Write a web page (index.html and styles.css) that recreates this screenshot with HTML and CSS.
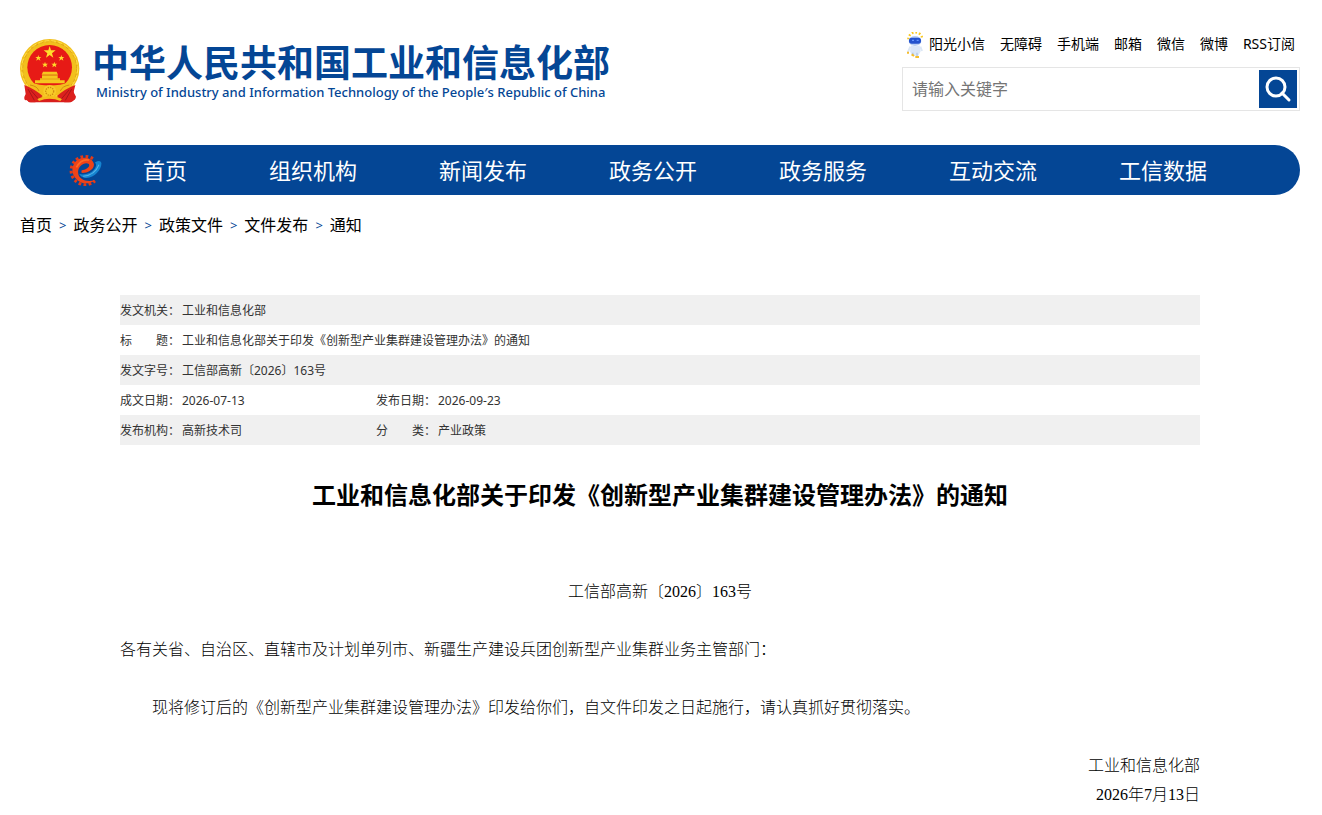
FILE: index.html
```html
<!DOCTYPE html>
<html lang="zh-CN">
  <head>
    <meta charset="utf-8">
    <meta name="viewport" content="width=device-width, initial-scale=1">
    <title>工业和信息化部关于印发《创新型产业集群建设管理办法》的通知</title>
    <link rel="stylesheet" href="styles.css">
  </head>
  <body>
    <div class="page">
      <header class="header">
        <a class="brand" href="/">
          <svg class="emblem" viewBox="30 27 180 192" aria-hidden="true">
            <path d="M60 160L48 202Q50 216 62 217H176Q194 216 197 200L180 160Z" fill="#d81e1c"/>
            <circle cx="119" cy="116" r="89" fill="#f2c01d"/>
            <circle cx="119" cy="116" r="81" fill="none" stroke="#e2a618" stroke-width="3" stroke-dasharray="9 7"/>
            <circle cx="119" cy="116" r="84" fill="none" stroke="#ffe04a" stroke-width="3" stroke-dasharray="14 6"/>
            <circle cx="119" cy="112" r="67" fill="#e71a16"/>
            <path d="M119 48L123 61H137L126 70L130 83L119 75L108 83L112 70L101 61H115Z" fill="#ffdf2b"/>
            <path id="star" d="M85 75L87 81H94L89 85L91 92L85 88L79 92L81 85L76 81H83Z" fill="#ffd92a"/>
            <use href="#star" x="69"/>
            <use href="#star" x="20" y="20"/>
            <use href="#star" x="48" y="20"/>
            <path d="M99 125H140L144 134H95ZM96 136H143V145H150V151H164V160H75V151H90V145H96Z" fill="#f6c71f"/>
            <path d="M90 147H150M96 136H143" stroke="#d9920f" stroke-width="2"/>
            <path d="M58 155Q119 178 181 155L184 170Q160 180 151 196H87Q77 178 54 170Z" fill="#f4bd1c"/>
            <path d="M60 165Q82 168 87 183M178 165Q157 168 151 183" fill="none" stroke="#d18b10" stroke-width="3"/>
            <circle cx="119" cy="184" r="19" fill="#f8cb28"/>
            <circle cx="119" cy="184" r="12" fill="none" stroke="#d18b10" stroke-width="4" stroke-dasharray="4 3"/>
            <path d="M43 165Q72 176 98 198L76 217H57L51 210Q42 214 43 201L47 192ZM196 165Q166 176 141 198L163 217H182L188 210Q198 212 197 198L190 190Z" fill="#dc201d"/>
            <path d="M54 177L73 211M62 180L86 208M185 177L166 211M177 180L153 208" stroke="#a81618" stroke-width="3"/>
            <path d="M82 207Q119 187 156 207L151 213Q119 199 87 213Z" fill="#f4bd1c"/>
          </svg>
          <span class="brand-text">
            <strong>中华人民共和国工业和信息化部</strong>
            <span class="brand-en">Ministry of Industry and Information Technology of the People′s Republic of China</span>
          </span>
        </a>
        <div class="tools">
          <div class="top-links">
            <a class="assistant" href="#">
              <svg class="robot" viewBox="50 32 48 78" aria-hidden="true">
                <path d="M54 54A21 21 0 0 1 96 54" fill="none" stroke="#f9c81e" stroke-width="7" stroke-dasharray="5 6"/>
                <ellipse cx="74" cy="59" rx="19" ry="15" fill="#b9cff3"/>
                <rect x="56" y="49" width="36" height="18" rx="8" fill="#2452cd"/>
                <path d="M65 57h6m8 0h6" stroke="#6596ff" stroke-width="4"/>
                <path d="M62 72Q75 78 88 72L91 90L84 103H65L59 90Z" fill="#dbe7f8"/>
                <path d="M60 76L52 94M90 76L95 89" stroke="#dce7f5" stroke-width="6"/>
                <path d="M67 94L69 103M80 94V106" stroke="#b8cdea" stroke-width="5"/>
                <path d="M64 99l7 5M75 107h11M50 94h6" stroke="#f5bd2c" stroke-width="6"/>
              </svg>阳光小信</a>
            <a href="#">无障碍</a>
            <a href="#">手机端</a>
            <a href="#">邮箱</a>
            <a href="#">微信</a>
            <a href="#">微博</a>
            <a href="#">RSS订阅</a>
          </div>
          <form class="search">
            <input type="text" name="q" placeholder="请输入关键字" aria-label="请输入关键字">
            <button type="submit" aria-label="搜索">
              <svg viewBox="0 0 38 38" aria-hidden="true">
                <circle cx="17" cy="17" r="9" fill="none" stroke="#fff" stroke-width="3"/>
                <path d="M23 23L30 30" stroke="#fff" stroke-width="3" stroke-linecap="round"/>
              </svg>
            </button>
          </form>
        </div>
      </header>

      <nav class="nav">
        <svg class="nav-logo" viewBox="180 44 98 95" aria-hidden="true">
          <path d="M251 58A42 42 0 1 0 257 124" fill="none" stroke="#e53a16" stroke-width="9" stroke-dasharray="8 7"/>
          <path d="M210 103C224 108 248 102 257 87Q264 76 257 69Q273 60 276 70C279 89 254 119 227 115Q215 113 210 103Z" fill="#1684d0"/>
          <path d="M222 110Q256 108 269 76" fill="none" stroke="#54b5e9" stroke-width="3"/>
          <path d="M217 100C230 102 256 92 254 74C250 48 200 46 191 83C183 119 229 147 258 121C235 129 208 121 207 99C206 79 228 66 239 74C244 83 230 91 217 93Z" fill="#ef4318"/>
          <path d="M202 84Q216 57 239 62" fill="none" stroke="#ff6a25" stroke-width="5"/>
        </svg>
        <a href="#">首页</a>
        <a href="#">组织机构</a>
        <a href="#">新闻发布</a>
        <a href="#">政务公开</a>
        <a href="#">政务服务</a>
        <a href="#">互动交流</a>
        <a href="#">工信数据</a>
      </nav>

      <div class="crumbs">
        <a href="#">首页</a>
        <span>&gt;</span>
        <a href="#">政务公开</a>
        <span>&gt;</span>
        <a href="#">政策文件</a>
        <span>&gt;</span>
        <a href="#">文件发布</a>
        <span>&gt;</span>
        <a href="#">通知</a>
      </div>

      <main class="article">
        <table class="info">
          <colgroup>
            <col class="label">
            <col class="value">
            <col class="label">
            <col>
          </colgroup>
          <tr>
            <th scope="row">发文机关：</th>
            <td colspan="3">工业和信息化部</td>
          </tr>
          <tr>
            <th scope="row">标　　题：</th>
            <td colspan="3">工业和信息化部关于印发《创新型产业集群建设管理办法》的通知</td>
          </tr>
          <tr>
            <th scope="row">发文字号：</th>
            <td colspan="3">工信部高新〔2026〕163号</td>
          </tr>
          <tr>
            <th scope="row">成文日期：</th>
            <td>2026-07-13</td>
            <th scope="row">发布日期：</th>
            <td>2026-09-23</td>
          </tr>
          <tr>
            <th scope="row">发布机构：</th>
            <td>高新技术司</td>
            <th scope="row">分　　类：</th>
            <td>产业政策</td>
          </tr>
        </table>

        <h1>工业和信息化部关于印发《创新型产业集群建设管理办法》的通知</h1>

        <div class="content">
          <p class="doc-number">工信部高新〔2026〕163号</p>
          <p>各有关省、自治区、直辖市及计划单列市、新疆生产建设兵团创新型产业集群业务主管部门：</p>
          <p class="indent">现将修订后的《创新型产业集群建设管理办法》印发给你们，自文件印发之日起施行，请认真抓好贯彻落实。</p>
          <p class="sign">工业和信息化部<br>2026年7月13日</p>
        </div>
      </main>
    </div>
  </body>
</html>
```

FILE: styles.css
```css
body {
  margin: 0;
  padding: 0 22px 0 20px;
  background: #fff;
  color: #000;
  font-family: "Noto Sans", "Noto Sans CJK SC", sans-serif;
  font-size: 16px;
}
a {
  color: inherit;
  text-decoration: none;
}
a:hover {
  text-decoration: underline;
}

.page {
  max-width: 1280px;
  margin: 0 auto;
}

.header {
  display: flex;
  justify-content: space-between;
  align-items: flex-start;
  padding: 32px 0 34px;
}
.brand {
  display: flex;
  gap: 12px;
  padding-top: 7px;
  color: #044695;
}
.brand:hover {
  text-decoration: none;
}
.emblem {
  width: 60px;
  height: 64px;
}
.brand-text {
  display: flex;
  flex-direction: column;
  padding-top: 6px;
  white-space: nowrap;
}
.brand-text strong {
  font-family: "Liberation Sans", "Noto Sans CJK SC", sans-serif;
  font-size: 37px;
  line-height: 39px;
}
.brand-en {
  padding-left: 4px;
  font-size: 13px;
  font-weight: 500;
  line-height: 16px;
}

.top-links {
  display: flex;
  justify-content: flex-end;
  gap: 15px;
  padding-right: 5px;
  font-size: 14px;
  line-height: 24px;
  white-space: nowrap;
}
.assistant {
  display: flex;
  gap: 6px;
}
.robot {
  width: 16px;
  height: 26px;
  margin-bottom: -2px;
}
.search {
  display: flex;
  box-sizing: border-box;
  width: 398px;
  margin-top: 11px;
  padding: 2px;
  border: 1px solid #e5e5e5;
}
.search input {
  flex: 1;
  min-width: 0;
  padding: 0 7px;
  border: 0;
  font: inherit;
}
.search input::placeholder {
  color: #757575;
}
.search button {
  width: 38px;
  height: 38px;
  padding: 0;
  border: 0;
  background: #044695;
}
.search svg {
  display: block;
}

.nav {
  display: flex;
  align-items: center;
  gap: 82px;
  padding-left: 49px;
  border-radius: 25px;
  background: #044695;
  color: #fff;
  font-size: 22px;
  line-height: 50px;
  white-space: nowrap;
}
.nav-logo {
  width: 33px;
  height: 32px;
  margin-right: -41px;
}

.crumbs {
  display: flex;
  gap: 7px;
  padding: 15px 0;
  line-height: 30px;
}
.crumbs span {
  color: #044695;
  font-size: 13px;
}

.article {
  padding: 40px 100px 0;
}
.info {
  width: 100%;
  border-collapse: collapse;
  table-layout: fixed;
  color: #333;
  font-size: 12px;
  line-height: 28px;
}
.info .label {
  width: 62px;
}
.info .value {
  width: 194px;
}
.info tr:nth-child(odd) {
  background: #f0f0f0;
}
.info th,
.info td {
  padding: 2px 0 0;
  text-align: left;
}
.info th {
  font-weight: normal;
  white-space: nowrap;
}

h1 {
  margin: 32px 0 0;
  font-size: 24px;
  line-height: 36px;
  text-align: center;
}

.content {
  padding-top: 64px;
  font-family: "Liberation Serif", "Noto Sans CJK SC", serif;
  font-weight: 300;
  line-height: 29px;
}
.content p {
  margin: 0 0 29px;
}
.content .doc-number {
  text-align: center;
}
.content .indent {
  text-indent: 2em;
}
.content .sign {
  margin-bottom: 0;
  text-align: right;
}
```
